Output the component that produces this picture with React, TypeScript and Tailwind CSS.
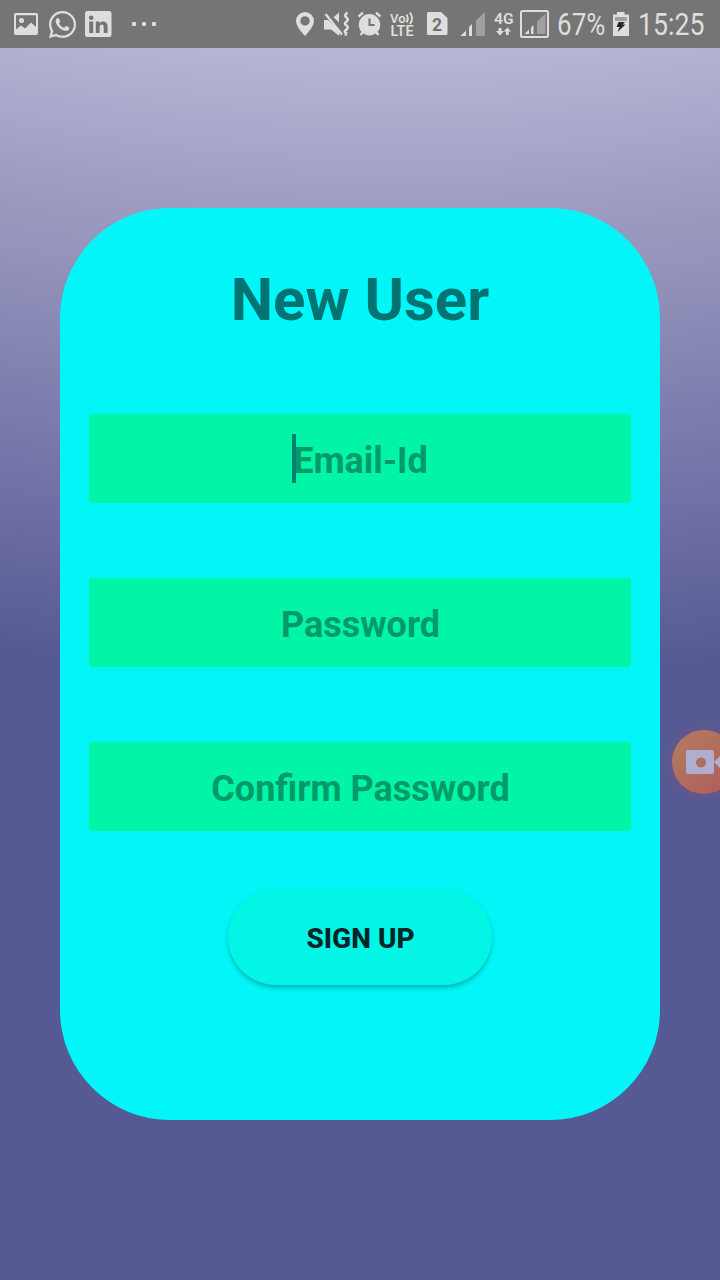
import { useState } from "react";
import type { ReactNode } from "react";
import { FaWhatsapp } from "react-icons/fa";

const INK = "#dedede";

function Glyph({ x, w, children }: { x: number; w: number; children: ReactNode }) {
  return (
    <svg width={w} height={48} viewBox={`${x} 0 ${w} 48`} fill={INK} className="block shrink-0">
      {children}
    </svg>
  );
}

function StatusBar() {
  return (
    <header className="flex h-12 shrink-0 items-center justify-between bg-[#757575] pr-[15px] pl-3.5 font-[Roboto,sans-serif] text-[#dedede]">
      <div className="flex items-center">
        <Glyph x={14} w={24}>
          <path fillRule="evenodd" d="M16 13H36a2 2 0 0 1 2 2V33a2 2 0 0 1-2 2H16a2 2 0 0 1-2-2V15a2 2 0 0 1 2-2ZM16 15.2V29.5L21 25.5 25 28.5 31 22.5 36 27V15.2Z" />
          <circle cx="21.5" cy="20.5" r="2.5" />
        </Glyph>
        <FaWhatsapp className="mr-[7px] ml-[9px] size-[31px] text-[#dedede]" />
        <Glyph x={85} w={27}>
          <rect x="85" y="11" width="26.5" height="26" rx="2.5" />
          <g fill="#757575">
            <circle cx="91.2" cy="17.7" r="2.3" />
            <path d="M89.2 21.6H93.2V33H89.2ZM95.8 21.6H99.6V23.3C101.9 20 107.6 21 107.6 26V33H103.7V27C103.7 23.5 99.7 23.8 99.7 27V33H95.8Z" />
          </g>
        </Glyph>
        <div className="ml-5 flex gap-[6px]">
          <span className="size-1 rounded-[1px] bg-[#dedede]" />
          <span className="size-1 rounded-[1px] bg-[#dedede]" />
          <span className="size-1 rounded-[1px] bg-[#dedede]" />
        </div>
      </div>
      <div className="flex items-center">
        <Glyph x={296} w={28}>
          <path fillRule="evenodd" d="M305 12a9 9 0 0 1 9 9C314 27 305 36 305 36S296 27 296 21A9 9 0 0 1 305 12ZM305 16.2a4.700 4.700 0 1 0 0 9.400a4.700 4.700 0 0 0 0-9.400Z" />
        </Glyph>
        <Glyph x={324} w={34}>
          <path d="M324 20H328L339.300 31V36L331 29.500H324ZM333.500 17.300 339 12.500V22.500Z" />
          <path d="M325.500 14 342 34.500" stroke={INK} strokeWidth="2.300" />
          <path d="M347.500 12.500Q343.500 15.500 346.500 17.500Q349 19.500 346.500 21.500Q343.500 23.500 346.500 25.500Q349 27.500 346.500 29.500Q343.500 31.500 346 33L345.500 35.500" fill="none" stroke={INK} strokeWidth="2.700" />
        </Glyph>
        <Glyph x={358} w={32}>
          <circle cx="369.500" cy="24.800" r="10.700" />
          <path d="M358.500 16.500 363 12.800M380.500 16.500 376 12.800M363 32 360.500 35M376 32 378.500 35" stroke={INK} strokeWidth="2.400" />
          <path d="M369.500 18.500V25H374.500" fill="none" stroke="#757575" strokeWidth="2.100" />
        </Glyph>
        <Glyph x={390} w={37}>
          <text x="390" y="22.500" fontSize="13" fontWeight="600" textLength="15.500" lengthAdjust="spacingAndGlyphs">Vo</text>
          <path d="M406.500 14.500Q409 18.500 406.500 22.500M409.800 12.500Q414.500 18.500 409.800 23.800" fill="none" stroke={INK} strokeWidth="1.900" />
          <text x="390.500" y="36" fontSize="14" fontWeight="600" textLength="23" lengthAdjust="spacingAndGlyphs">LTE</text>
        </Glyph>
        <Glyph x={427} w={33}>
          <path d="M428.500 12H441L447.500 18V33.500a1.500 1.500 0 0 1-1.500 1.500H428.500a1.500 1.500 0 0 1-1.500-1.500V13.500A1.500 1.500 0 0 1 428.500 12Z" />
          <text x="437" y="30.500" textAnchor="middle" fontSize="17.500" fontWeight="700" fill="#707070">2</text>
        </Glyph>
        <Glyph x={460} w={34}>
          <path d="M460.500 36 466 30.500V36ZM469 27 472 24V36H469Z" />
          <path d="M476 20.500 485 12V36H476Z" fill="#a0a0a0" />
        </Glyph>
        <Glyph x={494} w={26}>
          <text x="494" y="24" fontSize="15" fontWeight="600" textLength="19.500" lengthAdjust="spacingAndGlyphs">4G</text>
          <path d="M498.500 28H501.500V31H504L500 35.500 496 31H498.500ZM507.500 27.500 511 31.500H508.700V35H506V31.500H503.500Z" />
        </Glyph>
        <Glyph x={520} w={37}>
          <rect x="521" y="11" width="27" height="26" rx="1.500" fill="none" stroke={INK} strokeWidth="2" />
          <path d="M524.500 34 529 29.500V34ZM531 27.500 533.500 25V34H531Z" />
          <path d="M537 21.500 545.500 13.500V34H537Z" fill="#a0a0a0" />
        </Glyph>
        <div className="w-14">
          <span className="block w-max origin-left scale-x-[0.84] pt-[2px] text-[31px] leading-[48px]">67%</span>
        </div>
        <Glyph x={613} w={25}>
          <path d="M617 12H624.500V14.500H629V36H613V14.500H617Z" />
          <path d="M615 17H627V21H615Z" fill="#a0a0a0" />
          <path d="M618.500 22H625L622.500 24.500H625.500L617.500 32 619.500 27H616.500Z" fill="#272727" />
        </Glyph>
        <div className="w-[67px]">
          <span className="block w-max origin-left scale-x-[0.86] pt-[2px] text-[31px] leading-[48px]">15:25</span>
        </div>
      </div>
    </header>
  );
}

function Field({ label, focused }: { label: string; focused?: boolean }) {
  return (
    <label className="relative flex h-[89px] items-center rounded-[2px] bg-[#02f5a6]">
      <input
        aria-label={label}
        placeholder={label}
        className="h-full w-full bg-transparent pt-1 pl-px text-center text-[36px] font-bold text-[#036b4a] outline-none placeholder:text-[#029a69]"
      />
      {focused && <span className="absolute top-5 left-[203px] h-[49px] w-1 bg-[#03816f]" />}
    </label>
  );
}

export default function App() {
  const [recording, setRecording] = useState(false);
  return (
    <div className="relative flex h-[1280px] w-[720px] flex-col overflow-hidden bg-[#565a94] font-[Roboto,sans-serif]">
      <StatusBar />
      <main className="flex-1 bg-[radial-gradient(circle_at_400px_-2000px,#b6b7d5_2000px,#9d9dc2_2165px,#7777aa_2425px,#565a94_2630px)] px-[60px] pt-40">
        <form className="flex h-[912px] flex-col items-center rounded-[110px] bg-[#02f6f7]" onSubmit={(e) => e.preventDefault()}>
          <h1 className="mt-[56px] h-[72px] text-[60px] leading-[72px] font-bold text-[#027373]">New User</h1>
          <div className="mt-[78px] flex w-[542px] flex-col gap-[75px]">
            <Field label="Email-Id" focused />
            <Field label="Password" />
            <Field label="Confirm Password" />
          </div>
          <button className="mt-[58px] h-24 w-[264px] rounded-full bg-[#02f5e5] pt-1 pl-px text-[28px] font-extrabold text-[#032525] shadow-[0_3px_4px_rgba(0,70,80,0.35)]">
            SIGN UP
          </button>
        </form>
      </main>
      <button
        aria-pressed={recording}
        onClick={() => setRecording(!recording)}
        className="absolute top-[724px] left-[666px] flex size-[76px] items-center justify-center rounded-full bg-[#61578f]"
      >
        <span className="size-16 rounded-full bg-[linear-gradient(135deg,#b47e60,#ae5a59)]">
          <svg width="64" height="64" viewBox="0 0 64 64" fill="#b0aecf">
            <path fillRule="evenodd" d="M16 20H40a2 2 0 0 1 2 2V42a2 2 0 0 1-2 2H16a2 2 0 0 1-2-2V22a2 2 0 0 1 2-2ZM29 27.500a5 5 0 1 0 0 10a5 5 0 0 0 0-10Z" />
            <path d="M42 32 50 24V40Z" />
          </svg>
        </span>
      </button>
    </div>
  );
}
